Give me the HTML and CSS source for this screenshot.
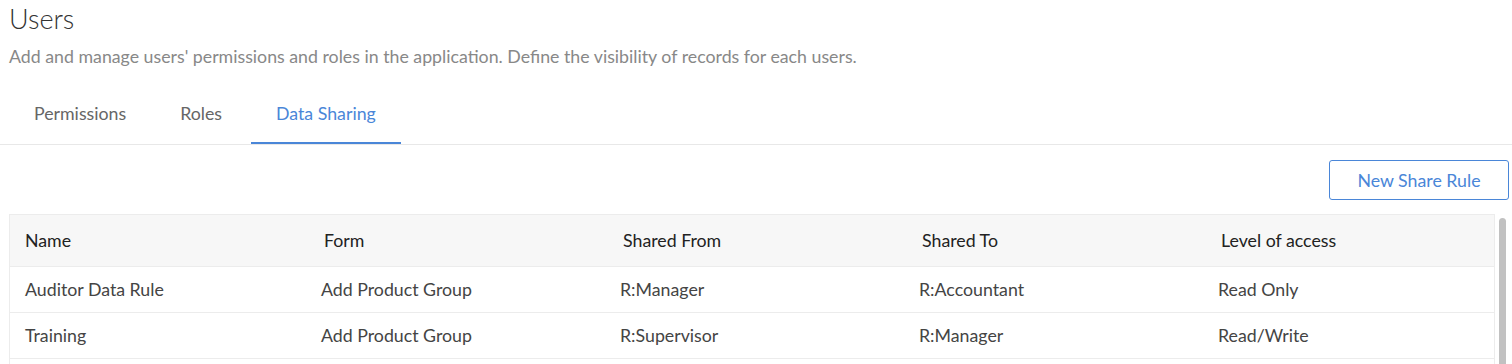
FILE: index.html
```html
<!DOCTYPE html>
<html>
<head>
<meta charset="utf-8">
<link rel="stylesheet" href="styles.css">
</head>
<body>
<div class="page">
  <header class="head">
    <h1 class="title">Users</h1>
    <p class="subtitle">Add and manage users' permissions and roles in the application. Define the visibility of records for each users.</p>
  </header>
  <nav class="tabs">
    <div class="tab">Permissions</div>
    <div class="tab">Roles</div>
    <div class="tab active">Data Sharing</div>
  </nav>
  <div class="toolbar">
    <button class="btn">New Share Rule</button>
  </div>
  <div class="scroller">
    <div class="table">
      <div class="row header">
        <div class="cell">Name</div>
        <div class="cell">Form</div>
        <div class="cell">Shared From</div>
        <div class="cell">Shared To</div>
        <div class="cell">Level of access</div>
      </div>
      <div class="row">
        <div class="cell">Auditor Data Rule</div>
        <div class="cell">Add Product Group</div>
        <div class="cell">R:Manager</div>
        <div class="cell">R:Accountant</div>
        <div class="cell">Read Only</div>
      </div>
      <div class="row">
        <div class="cell">Training</div>
        <div class="cell">Add Product Group</div>
        <div class="cell">R:Supervisor</div>
        <div class="cell">R:Manager</div>
        <div class="cell">Read/Write</div>
      </div>
    </div>
    <div class="scrollbar"><div class="thumb"></div></div>
  </div>
</div>
</body>
</html>
```
FILE: styles.css
```css
* { box-sizing: border-box; }
html, body { margin: 0; padding: 0; background: #fff; }
body {
  font-family: Lato, "Open Sans", "Liberation Sans", sans-serif;
  color: #333;
  overflow: hidden;
  height: 364px;
}
.page { display: flex; flex-direction: column; }
.head { padding: 0 3px 0 9px; }
.title {
  margin: 0;
  padding-top: 2px;
  font-size: 27px;
  font-weight: 300;
  line-height: 34px;
  color: #333;
}
.subtitle {
  margin: 10px 0 0;
  font-size: 17.75px;
  line-height: 20px;
  color: #888;
}
.tabs {
  display: flex;
  gap: 4px;
  margin-top: 27px;
  padding-left: 9px;
  border-bottom: 1px solid #e8e8e8;
  height: 52px;
}
.tab {
  padding: 0 25px;
  font-size: 17.75px;
  color: #666;
  line-height: 40px;
  border-bottom: 2px solid transparent;
  height: 51px;
}
.tab.active {
  color: #4a86d8;
  border-bottom-color: #4a86d8;
}
.toolbar {
  display: flex;
  justify-content: flex-end;
  padding: 15px 3px 0 9px;
}
.btn {
  width: 180px;
  height: 40px;
  border: 1px solid #4a86d8;
  border-radius: 3px;
  background: #fff;
  color: #4a86d8;
  font-family: inherit;
  font-size: 17.75px;
}
.scroller {
  display: flex;
  margin-top: 14px;
  padding-left: 9px;
}
.table {
  width: 1486px;
  border: 1px solid #ececec;
  border-bottom: none;
}
.row {
  display: grid;
  grid-template-columns: 299px 299px 299px 299px 1fr;
  height: 46px;
  align-items: center;
  border-bottom: 1px solid #ececec;
  font-size: 17.75px;
  color: #444;
}
.row.header {
  height: 52px;
  background: #f7f7f7;
  color: #222;
}
.cell { padding-bottom: 2px; }
.row .cell { padding-left: 12px; }
.row .cell:first-child { padding-left: 15px; }
.row.header .cell { padding-left: 15px; }
.scrollbar {
  width: 7px;
  margin-left: 4px;
  padding-top: 4px;
}
.thumb {
  width: 7px;
  height: 160px;
  border-radius: 4px;
  background: #c1c1c1;
}
```
